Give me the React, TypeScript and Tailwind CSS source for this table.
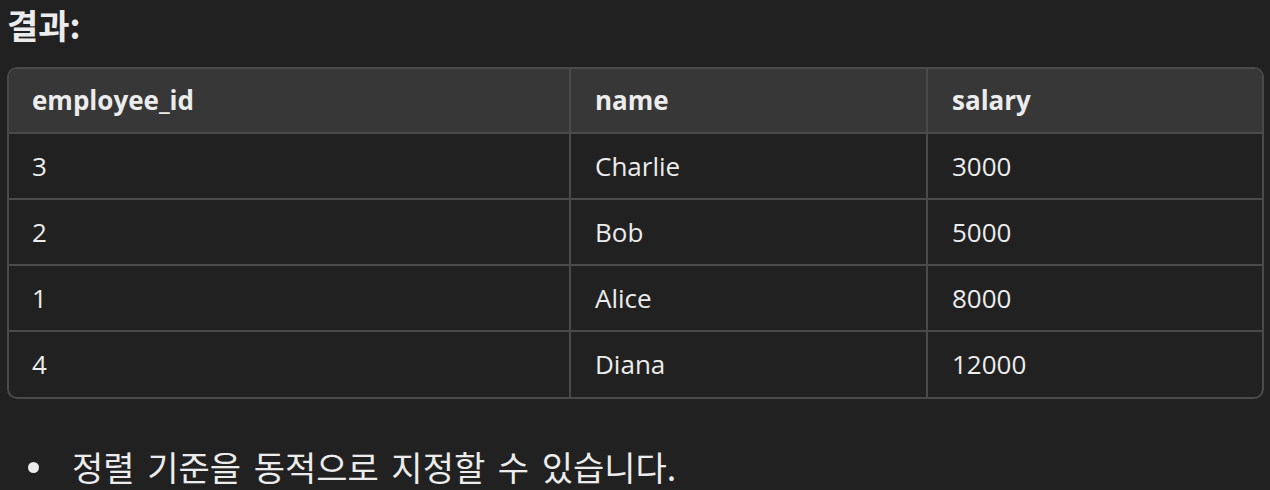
import React from "react";

const rows = [
  { id: "3", name: "Charlie", salary: "3000" },
  { id: "2", name: "Bob", salary: "5000" },
  { id: "1", name: "Alice", salary: "8000" },
  { id: "4", name: "Diana", salary: "12000" },
];

const latin = "font-['Open_Sans','Noto_Sans_CJK_KR',sans-serif]";
const korean = "font-['Noto_Sans_CJK_KR','Noto_Sans',sans-serif]";

export default function App() {
  return (
    <div className="w-[1270px] h-[490px] overflow-hidden bg-[#212121] text-[#ececec]">
      <h3 className={`${korean} pl-[7px] text-[34px] font-bold leading-[50px]`}>결과:</h3>

      <div className="mt-[17px] ml-[7px] mr-[6px] rounded-[10px] border-2 border-[#4a4a4a] overflow-hidden">
        <table className={`${latin} w-full border-collapse text-[26px]`}>
          <thead>
            <tr className="bg-[#373737] border-b-2 border-[#4a4a4a]">
              <th className="w-[561px] h-[64px] pl-[23px] text-left font-bold">employee_id</th>
              <th className="w-[357px] h-[64px] pl-[24px] text-left font-bold border-l-2 border-[#4a4a4a]">name</th>
              <th className="h-[64px] pl-[24px] text-left font-bold border-l-2 border-[#4a4a4a]">salary</th>
            </tr>
          </thead>
          <tbody>
            {rows.map((r, i) => (
              <tr key={r.id} className={i < rows.length - 1 ? "border-b-2 border-[#4a4a4a]" : ""}>
                <td className="h-[66px] pl-[23px]">{r.id}</td>
                <td className="h-[66px] pl-[24px] border-l-2 border-[#4a4a4a]">{r.name}</td>
                <td className="h-[66px] pl-[24px] border-l-2 border-[#4a4a4a]">{r.salary}</td>
              </tr>
            ))}
          </tbody>
        </table>
      </div>

      <ul className={`${korean} mt-[42px] pl-[28px] text-[34px] leading-[52px] [word-spacing:5px]`}>
        <li className="flex items-center gap-[33px]">
          <span className="w-[11px] h-[11px] rounded-full bg-[#ececec] shrink-0" />
          <span>정렬 기준을 동적으로 지정할 수 있습니다.</span>
        </li>
      </ul>
    </div>
  );
}
